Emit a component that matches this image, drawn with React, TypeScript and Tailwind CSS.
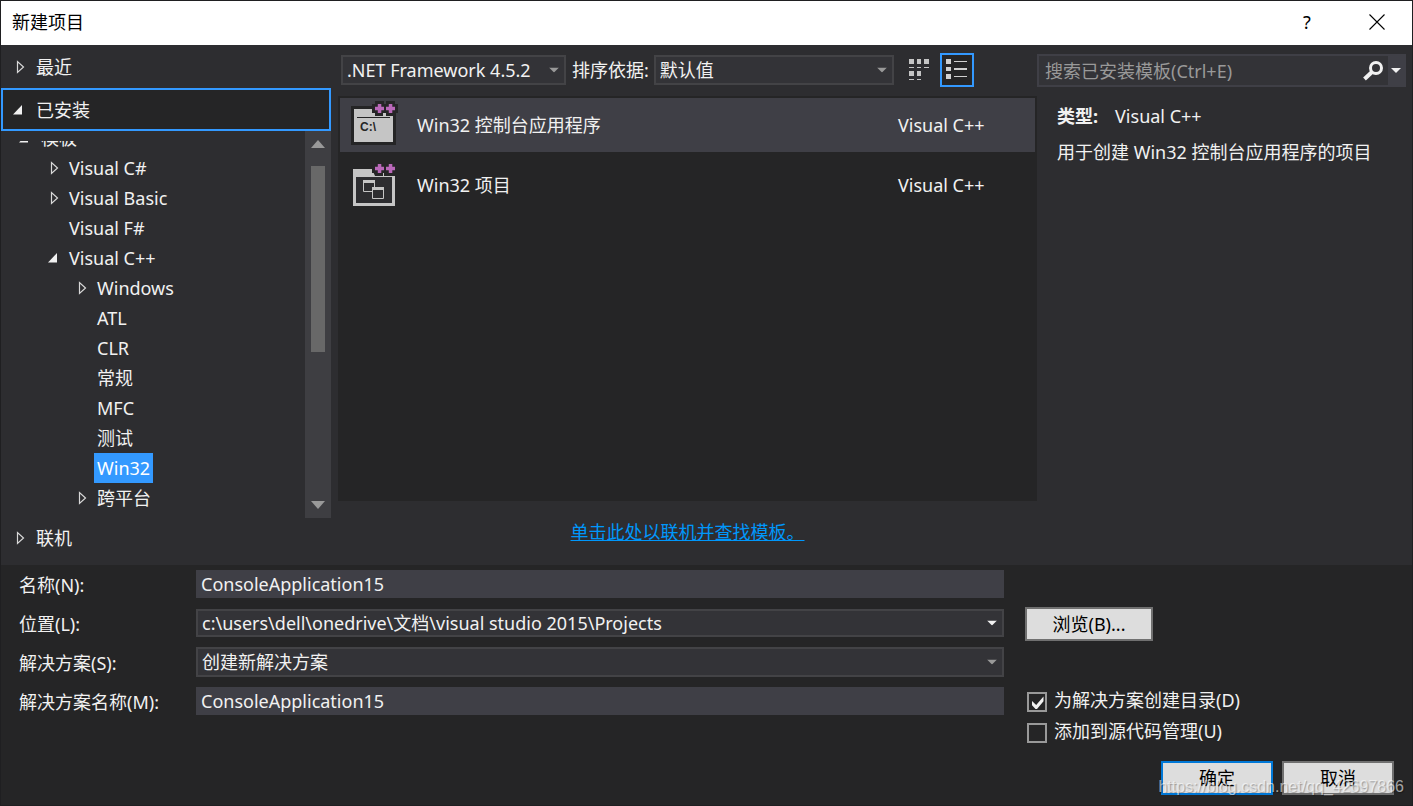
import React, { useState } from 'react';
import clsx from 'clsx';

interface TreeItem {
  label: string;
  level: number;
  state?: 'open' | 'closed';
}

const treeItems: TreeItem[] = [
  { label: 'Visual C#', level: 1, state: 'closed' },
  { label: 'Visual Basic', level: 1, state: 'closed' },
  { label: 'Visual F#', level: 1 },
  { label: 'Visual C++', level: 1, state: 'open' },
  { label: 'Windows', level: 2, state: 'closed' },
  { label: 'ATL', level: 2 },
  { label: 'CLR', level: 2 },
  { label: '常规', level: 2 },
  { label: 'MFC', level: 2 },
  { label: '测试', level: 2 },
  { label: 'Win32', level: 2 },
  { label: '跨平台', level: 2, state: 'closed' },
];

const Expander: React.FC<{ state?: 'open' | 'closed' }> = ({ state }) => (
  <svg width="12" height="14" viewBox="0 0 12 14" className="shrink-0">
    {state === 'closed' && <path d="M3.5 1.5v11l6-5.5z" fill="none" stroke="#d8d8d8" strokeWidth="1.2" />}
    {state === 'open' && <path d="M9 2v9.5H0z" fill="#f1f1f1" />}
  </svg>
);

const Arrow: React.FC<{ className?: string }> = ({ className }) => (
  <svg width="10" height="5" viewBox="0 0 10 5" className={className}>
    <path d="M0 0h10L5 5z" fill="currentColor" />
  </svg>
);

const PlusPlus = () => (
  <>
    <path d="M24 0h9v3h2V0h9v3h3v9h-3v3h-9v-3h-2v3h-9v-3h-3V3h3z" fill="#252526" />
    <path d="M26.800 3h3.500v2.800H33v3.500h-2.700V12h-3.500V9.300H24V5.800h2.800z" fill="#b968b9" />
    <path d="M37.800 3h3.500v2.800H44v3.500h-2.700V12h-3.500V9.300H35V5.800h2.800z" fill="#b968b9" />
  </>
);

const ConsoleIcon = () => (
  <svg width="47" height="48" viewBox="0 0 47 48" className="shrink-0">
    <path d="M0 5h45v39H0z" fill="#252526" />
    <path d="M3 8h39v33H3z" fill="#c5c5c5" />
    <path d="M6 16h33v1H6z" fill="#252526" />
    <text x="9" y="30" fontFamily="Liberation Sans" fontWeight="bold" fontSize="12" fill="#252526">C:\</text>
    <PlusPlus />
    <path d="M32 12h1v3h-1z" fill="#c5c5c5" />
  </svg>
);

const WindowIcon = () => (
  <svg width="47" height="48" viewBox="0 0 47 48" className="shrink-0">
    <path d="M2 8h19l3 7h20v30H2z" fill="#c5c5c5" />
    <path d="M5 16h36v26H5z" fill="#2d2d30" />
    <path d="M12.500 20v10.500h11V20z" fill="#2d2d30" stroke="#c5c5c5" />
    <path d="M12 19h12v3H12z" fill="#c5c5c5" />
    <path d="M21.500 27v10.500h11V27z" fill="#2d2d30" stroke="#c5c5c5" />
    <path d="M21 26h12v3H21z" fill="#c5c5c5" />
    <PlusPlus />
    <path d="M32 12h1v3h-1z" fill="#c5c5c5" />
  </svg>
);

interface ComboProps {
  id: string;
  value: string;
  className?: string;
  name?: string;
  strong?: boolean;
}

const Combo: React.FC<ComboProps> = ({ id, value, className, name, strong }) => (
  <div className={clsx('relative', className)}>
    <select
      id={id}
      aria-label={name}
      className="block h-full w-full appearance-none border-2 border-[#434346] bg-[#333337] px-1 text-[#f1f1f1] outline-none"
    >
      <option>{value}</option>
    </select>
    <Arrow className={clsx('pointer-events-none absolute top-1/2 right-[7px] -translate-y-1/2', strong ? 'text-[#f1f1f1]' : 'text-[#999999]')} />
  </div>
);

const Check: React.FC<{ label: string; initial: boolean }> = ({ label, initial }) => {
  const [checked, setChecked] = useState(initial);
  return (
    <label className="flex h-[31px] items-center gap-[7px]">
      <span className="relative mt-1 h-5 w-5">
        <input
          type="checkbox"
          checked={checked}
          onChange={() => setChecked(!checked)}
          className="block h-5 w-5 appearance-none border-2 border-[#999999] bg-[#252526]"
        />
        {checked && (
          <svg width="20" height="20" viewBox="0 0 20 20" className="pointer-events-none absolute inset-0">
            <path d="M5 9l4.200 4L16.500 4.500v4.800L10 17H8.500L5 13.200z" fill="#f1f1f1" />
          </svg>
        )}
      </span>
      <span>{label}</span>
    </label>
  );
};

const Sidebar = () => {
  const [selected, setSelected] = useState('Win32');

  return (
    <aside className="w-[330px] shrink-0">
      <button className="flex h-[43px] w-full items-center gap-2 pl-[13px]">
        <Expander state="closed" />
        <span className="pl-[2px]">最近</span>
      </button>
      <button className="flex h-[43px] w-full items-center gap-2 border-2 border-[#3399ff] bg-[#252526] pl-[10px]">
        <Expander state="open" />
        <span className="pl-[3px]">已安装</span>
      </button>

      <div className="flex h-[387px]">
        <div className="flex-1 pt-[10px]">
          <div className="flex h-full flex-col justify-end overflow-hidden pb-[5px]">
            <div className="flex h-[30px] shrink-0 items-center gap-2 pl-[18px]">
              <Expander state="open" />
              <span className="pl-[2px]">模板</span>
            </div>
            {treeItems.map((item) => (
              <div
                key={item.label}
                className={clsx('flex h-[30px] shrink-0 items-center', item.level === 1 ? 'pl-[47px]' : 'pl-[75px]')}
              >
                <Expander state={item.state} />
                <button
                  onClick={() => setSelected(item.label)}
                  className={clsx('ml-[6px] h-[30px] px-[3px]', selected === item.label && 'bg-[#3399ff] text-white')}
                >
                  {item.label}
                </button>
              </div>
            ))}
          </div>
        </div>

        {/* Scroll bar */}
        <div className="flex w-[26px] flex-col items-center bg-[#3e3e42] pt-[9px] pb-[9px] text-[#999999]">
          <svg width="14" height="8" viewBox="0 0 14 8">
            <path d="M7 0l7 8H0z" fill="currentColor" />
          </svg>
          <div className="mt-[18px] mb-auto h-[186px] w-[14px] bg-[#686868]" />
          <svg width="14" height="8" viewBox="0 0 14 8">
            <path d="M7 8L0 0h14z" fill="currentColor" />
          </svg>
        </div>
      </div>

      <button className="flex h-10 w-full items-center gap-2 pl-[13px]">
        <Expander state="closed" />
        <span className="pl-[2px]">联机</span>
      </button>
    </aside>
  );
};

const TemplateList = () => {
  const [active, setActive] = useState(0);
  const templates = [
    { name: 'Win32 控制台应用程序', icon: <ConsoleIcon /> },
    { name: 'Win32 项目', icon: <WindowIcon /> },
  ];

  return (
    <main className="ml-[7px] flex min-w-0 flex-1 flex-col">
      <div className="flex h-[51px] items-center pb-[2px] pl-[3px]">
        <Combo id="framework" name="框架" value=".NET Framework 4.5.2" className="h-[30px] w-[225px]" />
        <label htmlFor="sort" className="mr-[5px] ml-[6px] whitespace-nowrap">排序依据:</label>
        <Combo id="sort" value="默认值" className="h-[30px] w-[240px]" />
        <button aria-label="小图标" className="ml-2 flex h-[34px] w-[34px] items-center justify-center">
          <svg width="20" height="22" viewBox="0 0 20 22" fill="#c5c5c5">
            <path d="M0 0h5v5H0zM8 0h4v5H8zM15 0h5v5h-5zM0 12h5v5H0zM8 12h4v5H8z" />
            <path d="M0 8h5v1H0zM8 8h4v1H8zM15 8h5v1h-5zM0 20h5v1H0zM8 20h4v1H8z" />
          </svg>
        </button>
        <button aria-label="列表" className="ml-1 flex h-[34px] w-[34px] items-center justify-center border-2 border-[#3399ff] bg-[#252526]">
          <svg width="22" height="22" viewBox="0 0 22 22" fill="#d0d0d0">
            <path d="M0 0h5v5H0zM0 8h5v4H0zM0 15h5v5H0zM8 2h13v1H8zM8 9h13v2H8zM8 17h13v1H8z" />
          </svg>
        </button>
      </div>

      <div className="flex h-[405px] flex-col gap-[6px] border-2 border-[#252526] bg-[#252526]">
        {templates.map((t, i) => (
          <button
            key={t.name}
            onClick={() => setActive(i)}
            className={clsx('flex h-[54px] w-full items-center pl-[11px] text-left', active === i && 'bg-[#3f3f46]')}
          >
            {t.icon}
            <span className="flex-1 pl-[19px]">{t.name}</span>
            <span className="w-[137px]">Visual C++</span>
          </button>
        ))}
      </div>

      <div className="flex flex-1 items-center justify-center pb-[2px]">
        <a href="#" className="text-[#0097fb] underline">单击此处以联机并查找模板。</a>
      </div>
    </main>
  );
};

const Details = () => (
  <aside className="w-[375px] shrink-0 pt-[9px] pr-[6px]">
    <div className="flex h-[33px] border-2 border-[#3f3f46] bg-[#333337]">
      <input
        type="text"
        aria-label="搜索已安装模板"
        placeholder="搜索已安装模板(Ctrl+E)"
        className="min-w-0 flex-1 bg-transparent pl-[6px] outline-none placeholder:text-[#999999]"
      />
      <button aria-label="搜索" className="flex w-[30px] items-center justify-center">
        <svg width="22" height="22" viewBox="0 0 22 22" fill="none" stroke="#f1f1f1">
          <circle cx="14" cy="8" r="5.500" strokeWidth="3" />
          <path d="M10 12l-7.500 7" strokeWidth="4" />
        </svg>
      </button>
      <button aria-label="搜索选项" className="flex w-[16px] items-center justify-center bg-[#3f3f46] text-[#f1f1f1]">
        <Arrow />
      </button>
    </div>
    <div className="pt-[11px] pl-5">
      <p className="flex h-9 items-center gap-[17px]">
        <b>类型:</b>
        <span>Visual C++</span>
      </p>
      <p className="flex h-9 items-center">用于创建 Win32 控制台应用程序的项目</p>
    </div>
  </aside>
);

const rowClass = 'flex h-[39px] items-center pb-px';
const labelClass = 'w-[177px] shrink-0 pt-[2px]';
const inputClass = 'h-7 min-w-0 flex-1 bg-[#3f3f46] px-[5px] outline-none';

const ProjectForm = () => {
  const [name, setName] = useState('ConsoleApplication15');
  const [solution, setSolution] = useState('ConsoleApplication15');

  return (
    <form className="flex flex-1 bg-[#252526] pl-[18px]" onSubmit={(e) => e.preventDefault()}>
      <div className="min-w-0 flex-1">
        <div className={rowClass}>
          <label htmlFor="name" className={labelClass}>名称(N):</label>
          <input id="name" type="text" value={name} onChange={(e) => setName(e.target.value)} className={inputClass} />
        </div>
        <div className={rowClass}>
          <label htmlFor="location" className={labelClass}>位置(L):</label>
          <Combo id="location" value="c:\users\dell\onedrive\文档\visual studio 2015\Projects" className="h-7 flex-1" strong />
        </div>
        <div className={rowClass}>
          <label htmlFor="mode" className={labelClass}>解决方案(S):</label>
          <Combo id="mode" value="创建新解决方案" className="h-[30px] flex-1" />
        </div>
        <div className={rowClass}>
          <label htmlFor="solution" className={labelClass}>解决方案名称(M):</label>
          <input id="solution" type="text" value={solution} onChange={(e) => setSolution(e.target.value)} className={inputClass} />
        </div>
      </div>

      <div className="flex w-[408px] shrink-0 flex-col pt-[42px] pr-[18px] pl-[21px]">
        <button type="button" className="h-[34px] w-[128px] border-2 border-[#707070] bg-[#dddddd] text-black">浏览(B)...</button>
        <div className="mt-[43px] pl-[2px]">
          <Check label="为解决方案创建目录(D)" initial={true} />
          <Check label="添加到源代码管理(U)" initial={false} />
        </div>
        <div className="mt-[15px] flex justify-end gap-[9px]">
          <button type="submit" className="h-[34px] w-28 border-2 border-[#0078d7] bg-[#dddddd] text-black">确定</button>
          <button type="button" className="h-[34px] w-28 border-2 border-[#707070] bg-[#dddddd] text-black">取消</button>
        </div>
      </div>
    </form>
  );
};

const App = () => {
  return (
    <div className="relative flex min-h-screen flex-col border border-[#1f1f21] bg-[#2d2d30] font-['Noto_Sans','Noto_Sans_CJK_SC',sans-serif] text-[18px] leading-6 text-[#f1f1f1]">
      <header className="flex h-11 items-center justify-between bg-white pb-[2px] pl-[11px] text-black">
        <h1>新建项目</h1>
        <div className="flex">
          <button aria-label="帮助" className="w-[70px] text-center">?</button>
          <button aria-label="关闭" className="flex w-[70px] items-center justify-center">
            <svg width="16" height="16" viewBox="0 0 16 16" stroke="#000" strokeWidth="1.1">
              <path d="M0.500 0.500l15 15M15.500 0.500l-15 15" />
            </svg>
          </button>
        </div>
      </header>

      <div className="flex h-[520px]">
        <Sidebar />
        <TemplateList />
        <Details />
      </div>

      <ProjectForm />

      {/* Watermark */}
      <span className="pointer-events-none absolute right-2 bottom-[6px] font-['Liberation_Sans',sans-serif] text-[16px] text-white/60 [text-shadow:1px_1px_1px_rgba(0,0,0,0.3)]">
        https://blog.csdn.net/qq_42697866
      </span>
    </div>
  );
};

export default App;
